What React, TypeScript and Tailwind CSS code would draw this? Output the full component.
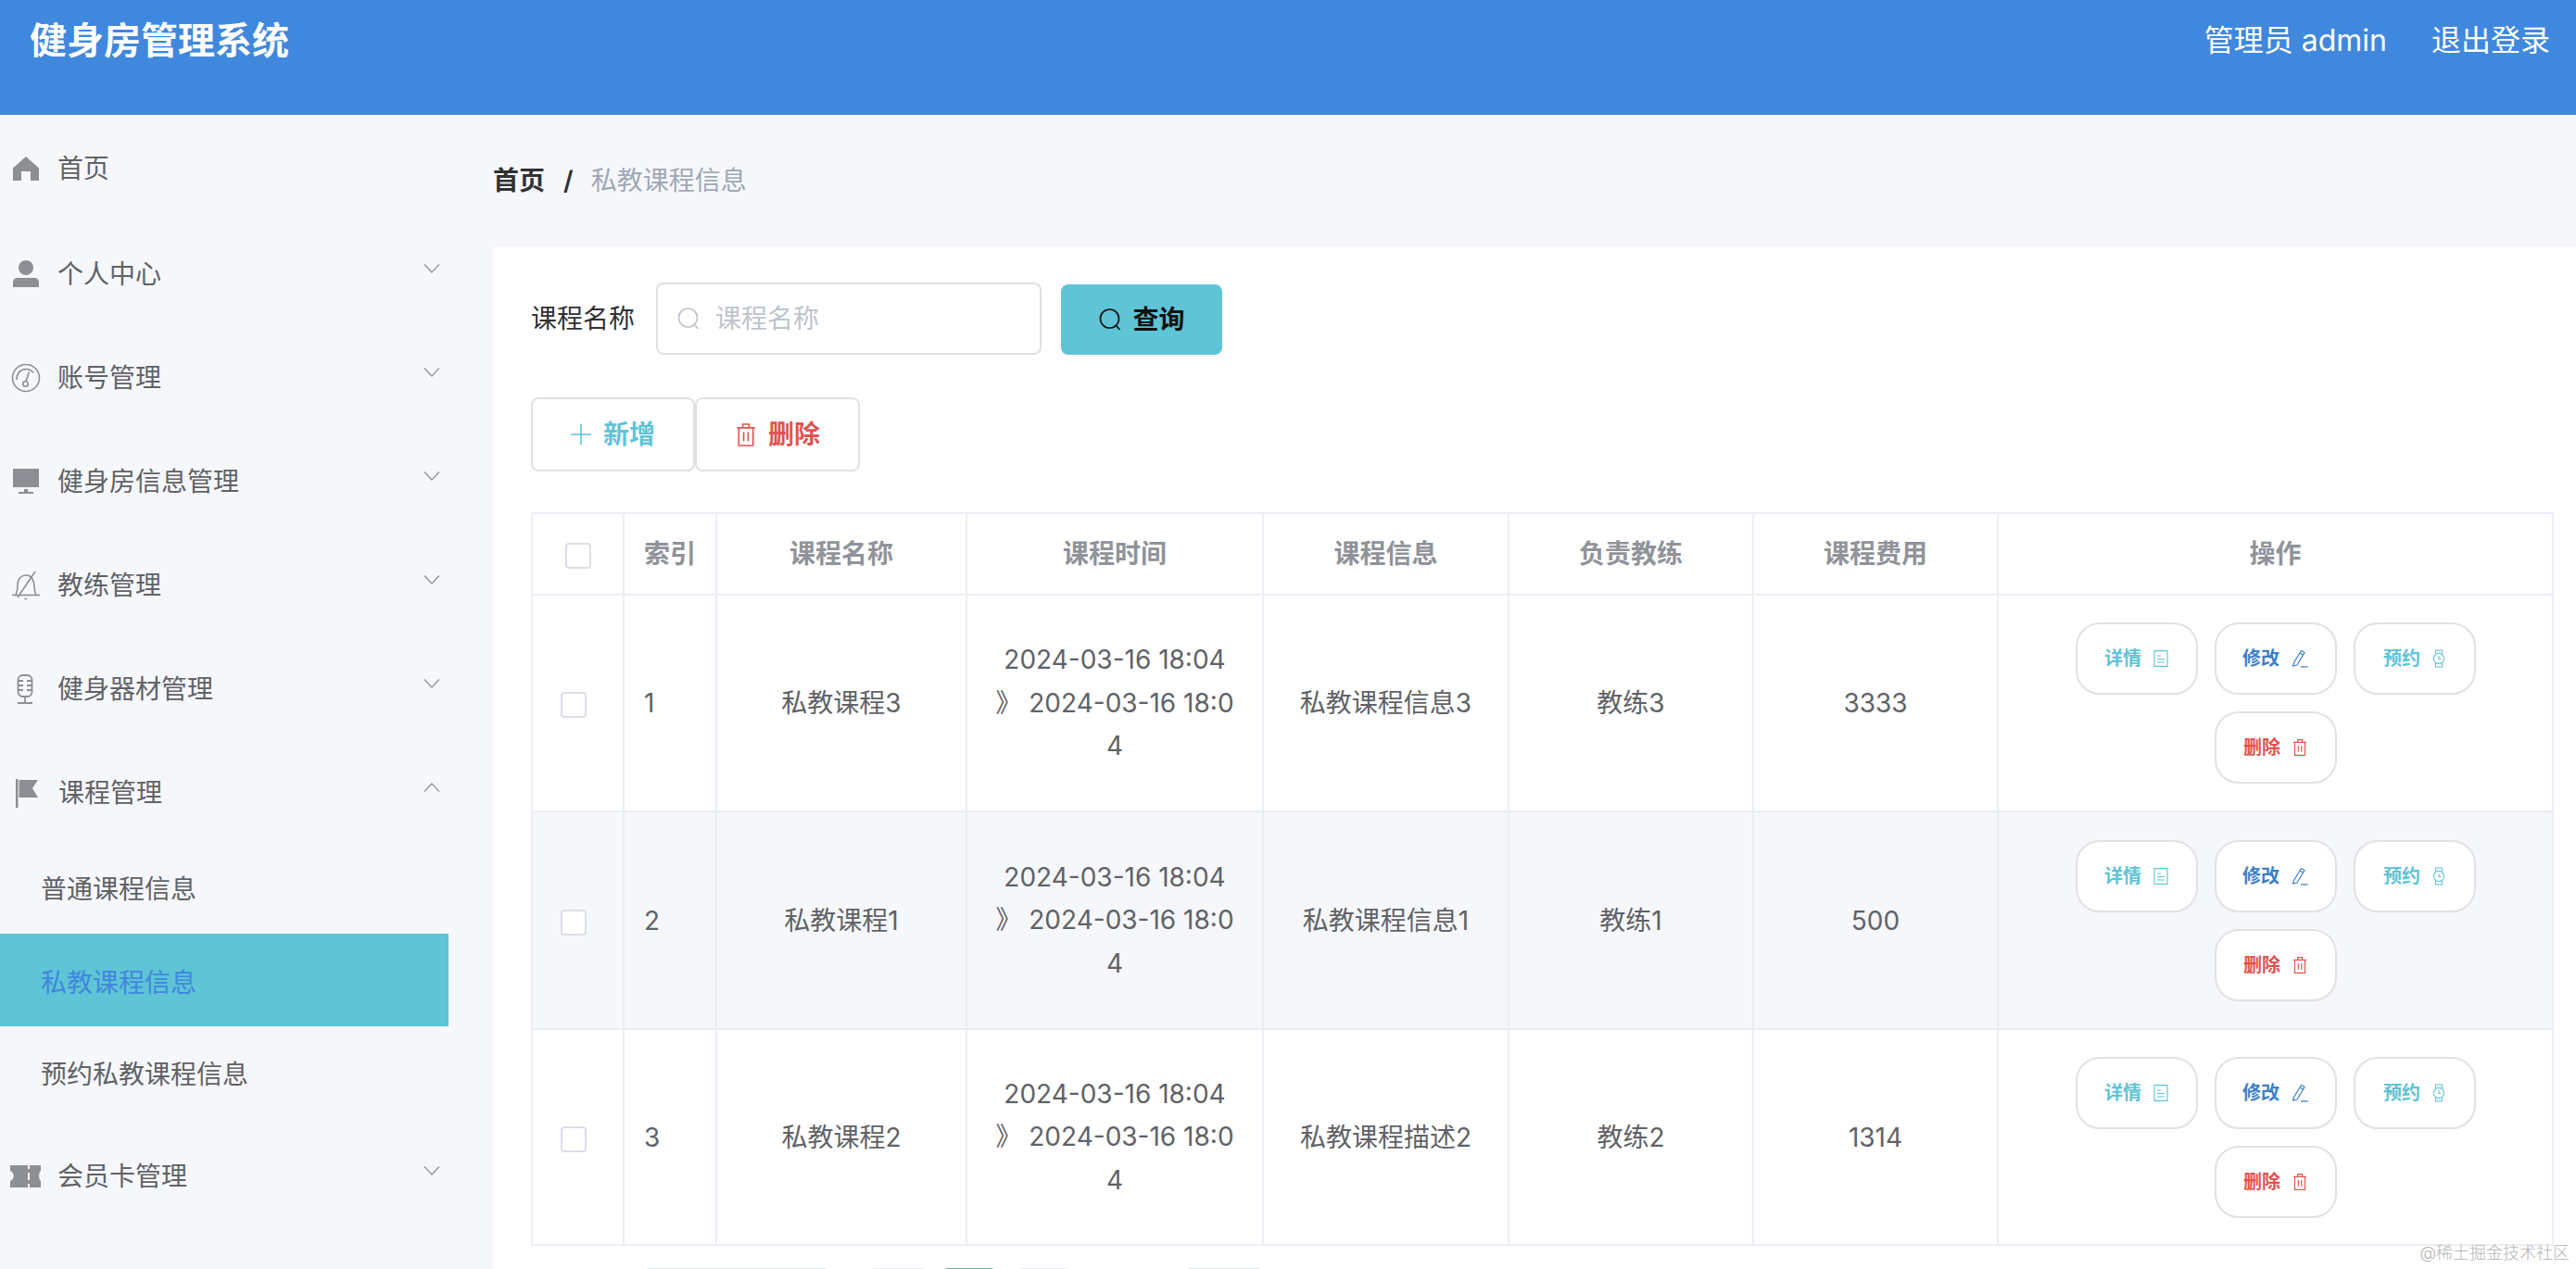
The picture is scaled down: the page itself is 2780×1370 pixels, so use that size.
import React from "react";

type IconProps = { className?: string };

const HomeIcon = ({ className }: IconProps) => (
  <svg viewBox="0 0 28 26" className={className} fill="currentColor">
    <path d="M14 0 28 12.5V26H19V16H9V26H0V12.5Z" />
  </svg>
);

const PersonIcon = ({ className }: IconProps) => (
  <svg viewBox="0 0 28 29" className={className} fill="currentColor">
    <ellipse cx="14" cy="8" rx="8" ry="8" />
    <path d="M5 19H23C26 19 28 21 28 24V29H0V24C0 21 2 19 5 19Z" />
  </svg>
);

const GaugeIcon = ({ className }: IconProps) => (
  <svg viewBox="0 0 32 32" className={className} fill="none" stroke="currentColor" strokeWidth="1.6">
    <circle cx="16" cy="16" r="14.5" />
    <path d="M6 18C6 11 10 6.5 16 6.5C19 6.5 22 7.8 24 10.5" />
    <circle cx="15.5" cy="22.5" r="2.8" />
    <path d="M16 19.5 19.5 9.5" />
  </svg>
);

const MonitorIcon = ({ className }: IconProps) => (
  <svg viewBox="0 0 28 27" className={className} fill="currentColor">
    <path d="M0 0H28V20H0Z" />
    <path d="M12 22H16V25H22V27H6V25H12Z" />
  </svg>
);

const BellOffIcon = ({ className }: IconProps) => (
  <svg viewBox="0 0 32 32" className={className} fill="none" stroke="currentColor" strokeWidth="1.6">
    <path d="M5 26C7 22 7 18 7 15C7 9 11 5 16 5C19 5 21.5 6.5 23 9C24.5 11.5 25 14 25 17C25 20 25.5 23.5 27 26" />
    <path d="M1 26.5H31" />
    <path d="M26 1 7 29" />
    <path d="M14.5 30.5H17" />
  </svg>
);

const MicIcon = ({ className }: IconProps) => (
  <svg viewBox="0 0 20 32" className={className} fill="none" stroke="currentColor" strokeWidth="1.8">
    <rect x="2.5" y="1" width="15" height="23" rx="5" />
    <path d="M2.5 7H8M12 7H17.5M2.5 12H8M12 12H17.5M2.5 17H8M12 17H17.5" />
    <path d="M10 24V31M2 31H18" />
  </svg>
);

const FlagIcon = ({ className }: IconProps) => (
  <svg viewBox="0 0 24 31" className={className} fill="currentColor">
    <path d="M0 0H2.5V31H0Z" />
    <path d="M3.5 1H24L18 10L24 20H3.5Z" />
  </svg>
);

const TicketIcon = ({ className }: IconProps) => (
  <svg viewBox="0 0 33 24" className={className} fill="currentColor">
    <path d="M0 0H19V4H21V0H33V6C30.5 7.5 30.5 15.5 33 17V24H21V20H19V24H0V17C5 15 5 8 0 6ZM19 8V16H21V8Z" />
  </svg>
);

const Chevron = ({ up }: { up?: boolean }) => (
  <svg viewBox="0 0 18 10" className="ml-auto mb-[12px] h-[10px] w-[18px]" fill="none" stroke="#909399" strokeWidth="1.3">
    <path d={up ? "M1 9.5 9 1 17 9.5" : "M1 .5 9 9 17 .5"} />
  </svg>
);

const SearchIcon = ({ className }: IconProps) => (
  <svg viewBox="0 0 24 24" className={className} fill="none" stroke="currentColor" strokeWidth="1.7">
    <circle cx="11.5" cy="11" r="10" />
    <path d="M18.5 18.5 22.5 23" />
  </svg>
);

const PlusIcon = ({ className }: IconProps) => (
  <svg viewBox="0 0 22 22" className={className} fill="none" stroke="currentColor" strokeWidth="1.6">
    <path d="M11 0V22M0 11H22" />
  </svg>
);

const TrashIcon = ({ className }: IconProps) => (
  <svg viewBox="0 0 22 26" className={className} fill="none" stroke="currentColor" strokeWidth="1.7">
    <path d="M1 5H21M3 5V25H19V5M7.5 5V1H14.5V5M8.5 10V20M13.5 10V20" />
  </svg>
);

const DocIcon = ({ className }: IconProps) => (
  <svg viewBox="0 0 16 18" className={className} fill="none" stroke="currentColor" strokeWidth="1.1">
    <path d="M1 .6H15V17.4H1Z" />
    <path d="M4 6H8M4 9.5H12M4 13H12" />
  </svg>
);

const PenIcon = ({ className }: IconProps) => (
  <svg viewBox="0 0 18 20" className={className} fill="none" stroke="currentColor" strokeWidth="1.2">
    <path d="M10.5 1.5 14 3.5 6 17 1.5 18 2.5 14.5Z" />
    <path d="M9 4 12.5 6M10 18.8H17.5" />
  </svg>
);

const WatchIcon = ({ className }: IconProps) => (
  <svg viewBox="0 0 14 20" className={className} fill="none" stroke="currentColor" strokeWidth="1.1">
    <circle cx="7" cy="10" r="5.6" />
    <path d="M3.5 5.5V1H10.5V5.5M3.5 14.5V19H10.5V14.5M7 7V10.5H9.5" />
  </svg>
);

const menuIconClass = "text-[#8d8f94] shrink-0";

const topMenu = [
  { label: "个人中心", icon: <PersonIcon className={`${menuIconClass} ml-[14px] mr-[20px] h-[29px] w-[28px]`} /> },
  { label: "账号管理", icon: <GaugeIcon className={`${menuIconClass} ml-[12px] mr-[18px] h-[32px] w-[32px]`} /> },
  { label: "健身房信息管理", icon: <MonitorIcon className={`${menuIconClass} ml-[14px] mr-[20px] h-[27px] w-[28px]`} /> },
  { label: "教练管理", icon: <BellOffIcon className={`${menuIconClass} ml-[12px] mr-[18px] h-[32px] w-[32px]`} /> },
  { label: "健身器材管理", icon: <MicIcon className={`${menuIconClass} ml-[17px] mr-[25px] h-[32px] w-[20px]`} /> },
];

const rows = [
  { id: 1, name: "私教课程3", info: "私教课程信息3", coach: "教练3", fee: "3333", height: "h-[234px]" },
  { id: 2, name: "私教课程1", info: "私教课程信息1", coach: "教练1", fee: "500", height: "h-[235px]" },
  { id: 3, name: "私教课程2", info: "私教课程描述2", coach: "教练2", fee: "1314", height: "h-[233px]" },
];

const Checkbox = () => (
  <span className="inline-block h-[28px] w-[28px] rounded-[4px] border-2 border-[#dcdfe6] bg-white align-middle" />
);

const ActionButton = ({
  label,
  color,
  icon,
}: {
  label: string;
  color: string;
  icon: React.ReactNode;
}) => (
  <button className={`flex h-[78px] w-[132px] items-center justify-center gap-[13px] rounded-[26px] border-2 border-[#e1e2e5] bg-white text-[20px] font-semibold ${color}`}>
    {label}
    {icon}
  </button>
);

const thClass = "border-2 border-[#ebeef5] text-[28px] font-semibold text-[#909399]";
const tdClass = "border-2 border-[#ebeef5] text-center text-[28px] font-normal text-[#606266]";

export default function App() {
  return (
    <div className="relative flex h-[1370px] w-[2780px] flex-col overflow-hidden bg-[#f5f7fb] font-['Inter','Noto_Sans_CJK_SC',sans-serif]">
      <header className="flex h-[124px] shrink-0 items-start justify-between bg-[#3f88dd] px-[28px] pt-[14px] text-white">
        <div className="pl-[4px] text-[40px] font-bold leading-[60px]">健身房管理系统</div>
        <div className="flex gap-[48px] text-[32px] leading-[60px]">
          <span>管理员 admin</span>
          <span>退出登录</span>
        </div>
      </header>

      <div className="flex min-h-0 flex-1">
        <aside className="w-[532px] shrink-0">
          <nav className="w-[484px] text-[28px] text-[#606266]">
            <div className="flex h-[112px] items-center pt-[4px]">
              <HomeIcon className={`${menuIconClass} ml-[14px] mr-[20px] h-[26px] w-[28px]`} />
              <span>首页</span>
            </div>
            {topMenu.map((item) => (
              <div key={item.label} className="flex h-[112px] items-center pr-[9px] pt-[7px]">
                {item.icon}
                <span>{item.label}</span>
                <Chevron />
              </div>
            ))}
            <div className="flex h-[112px] items-center pr-[9px] pt-[8px]">
              <FlagIcon className={`${menuIconClass} ml-[17px] mr-[22px] h-[31px] w-[24px]`} />
              <span>课程管理</span>
              <Chevron up />
            </div>
            <div className="flex h-[100px] items-center pl-[44px] pt-[4px]">普通课程信息</div>
            <div className="flex h-[100px] items-center bg-[#5ec4d6] pl-[44px] pt-[6px] text-[#3f88dd]">私教课程信息</div>
            <div className="flex h-[100px] items-center pl-[44px] pt-[4px]">预约私教课程信息</div>
            <div className="mt-[2px] flex h-[112px] items-center pr-[9px] pt-[7px]">
              <TicketIcon className={`${menuIconClass} ml-[11px] mr-[18px] h-[24px] w-[33px]`} />
              <span>会员卡管理</span>
              <Chevron />
            </div>
          </nav>
        </aside>

        <main className="flex min-w-0 flex-1 flex-col">
          <div className="flex h-[142px] shrink-0 items-center text-[28px]">
            <span className="font-semibold text-[#303133]">首页</span>
            <span className="ml-[20px] mr-[19px] font-semibold text-[#303133]">/</span>
            <span className="text-[#a0a8b5]">私教课程信息</span>
          </div>

          <section className="flex-1 rounded-tl-[6px] bg-white pl-[41px] pr-[25px] pt-[39px]">
            <div className="flex h-[78px] items-center">
              <label className="mr-[23px] text-[28px] text-[#303133]">课程名称</label>
              <div className="flex h-[78px] w-[416px] items-center rounded-[8px] border-2 border-[#dfe1e5] bg-white pl-[21px] text-[28px] text-[#c0c4cc]">
                <SearchIcon className="mr-[17px] h-[24px] w-[24px]" />
                课程名称
              </div>
              <button className="ml-[21px] mt-[2px] flex h-[76px] w-[174px] items-center justify-center gap-[13px] rounded-[8px] bg-[#5ec4d6] text-[28px] font-semibold text-[#111]">
                <SearchIcon className="h-[24px] w-[24px]" />
                查询
              </button>
            </div>

            <div className="mt-[46px] flex">
              <button className="flex h-[80px] w-[177px] items-center justify-center gap-[13px] rounded-[8px] border-2 border-[#dfe1e5] bg-white text-[28px] font-semibold text-[#5ec4d6]">
                <PlusIcon className="h-[22px] w-[22px]" />
                新增
              </button>
              <button className="flex h-[80px] w-[178px] items-center justify-center gap-[12px] rounded-[8px] border-2 border-[#dfe1e5] bg-white text-[28px] font-semibold text-[#e0534e]">
                <TrashIcon className="h-[25px] w-[24px]" />
                删除
              </button>
            </div>

            <table className="mt-[44px] w-[2181px] table-fixed border-collapse">
              <colgroup>
                <col className="w-[99px]" />
                <col className="w-[100px]" />
                <col className="w-[270px]" />
                <col className="w-[320px]" />
                <col className="w-[265px]" />
                <col className="w-[264px]" />
                <col className="w-[264px]" />
                <col className="w-[599px]" />
              </colgroup>
              <thead>
                <tr className="h-[88px]">
                  <th className={thClass}>
                    <Checkbox />
                  </th>
                  <th className={`${thClass} pl-[21px] text-left`}>索引</th>
                  <th className={thClass}>课程名称</th>
                  <th className={thClass}>课程时间</th>
                  <th className={thClass}>课程信息</th>
                  <th className={thClass}>负责教练</th>
                  <th className={thClass}>课程费用</th>
                  <th className={thClass}>操作</th>
                </tr>
              </thead>
              <tbody>
                {rows.map((row) => (
                  <tr key={row.id} className={`${row.height} ${row.id === 2 ? "bg-[#f5f7fa]" : "bg-white"}`}>
                    <td className={`${tdClass} pr-[10px]`}>
                      <Checkbox />
                    </td>
                    <td className={`${tdClass} pl-[21px] !text-left`}>{row.id}</td>
                    <td className={tdClass}>{row.name}</td>
                    <td className={`${tdClass} break-all px-[26px] leading-[46.5px]`}>
                      2024-03-16 18:04 》 2024-03-16 18:04
                    </td>
                    <td className={tdClass}>{row.info}</td>
                    <td className={tdClass}>{row.coach}</td>
                    <td className={tdClass}>{row.fee}</td>
                    <td className={`${tdClass} px-[20px]`}>
                      <div className="flex flex-wrap justify-center gap-[18px]">
                        <ActionButton label="详情" color="text-[#5ec4d6]" icon={<DocIcon className="h-[18px] w-[16px]" />} />
                        <ActionButton label="修改" color="text-[#3f7fc8]" icon={<PenIcon className="h-[20px] w-[18px]" />} />
                        <ActionButton label="预约" color="text-[#5ec4d6]" icon={<WatchIcon className="h-[20px] w-[14px]" />} />
                        <ActionButton label="删除" color="text-[#e0534e]" icon={<TrashIcon className="h-[18px] w-[16px]" />} />
                      </div>
                    </td>
                  </tr>
                ))}
              </tbody>
            </table>

            <div className="mt-[24px] flex pl-[122px]">
              <div className="h-[40px] w-[200px] rounded-t-[6px] bg-[#dcdfe4]" />
              <div className="ml-[43px] h-[40px] w-[62px] rounded-t-[6px] bg-[#eceef1]" />
              <div className="ml-[17px] h-[40px] w-[58px] rounded-t-[6px] bg-[#5bb89a]" />
              <div className="ml-[23px] h-[40px] w-[58px] rounded-t-[6px] bg-[#eceef1]" />
              <div className="ml-[123px] h-[40px] w-[84px] rounded-t-[6px] bg-[#dcdfe4]" />
            </div>
          </section>
        </main>
      </div>

      <span className="absolute bottom-[6px] right-[7px] text-[18px] font-light leading-[22px] text-[#b4b4b4]">
        @稀土掘金技术社区
      </span>
    </div>
  );
}
